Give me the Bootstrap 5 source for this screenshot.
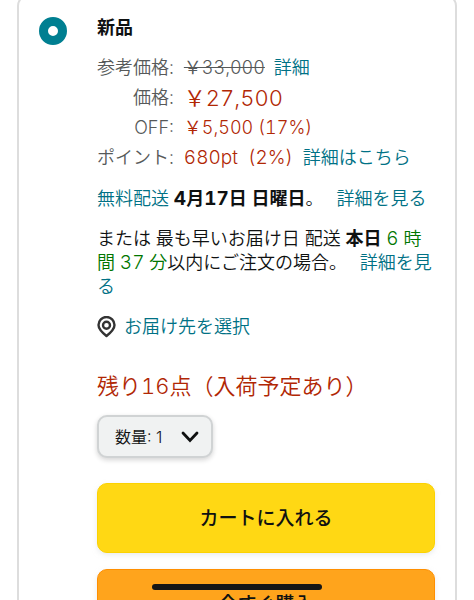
<!DOCTYPE html>
<html lang="ja">
<head>
<meta charset="utf-8">
<meta name="viewport" content="width=device-width, initial-scale=1">
<title>新品 - 購入オプション</title>
<link href="https://cdn.jsdelivr.net/npm/bootstrap@5.3.0/dist/css/bootstrap.min.css" rel="stylesheet">
<style>
  body { font-family: Inter, "Noto Sans CJK JP", sans-serif; font-size: 18px; line-height: 24px; font-weight: 350; font-variant-numeric: tabular-nums; color: #0f1111; background: #fff; }
  a { color: #007185; text-decoration: none; }
  b, .offer-title { font-weight: 700; }
  .screen { height: 100vh; }
  .offer { margin: -6px 17px 0; padding: 20px 20px 20px; border: 2px solid #ddd; border-radius: 12px; gap: 30px; }
  .offer-radio { appearance: none; flex: none; width: 28px; height: 28px; margin: 1px 0 0; border: 9px solid #007f91; border-radius: 50%; background: #fff; }
  .offer-title { font-size: 18px; line-height: 24px; margin: 0 0 13px; }
  .prices { margin-bottom: 14px; }
  .prices th, .prices td { height: 30px; padding: 0; line-height: 24px; vertical-align: middle; white-space: nowrap; }
  .prices th { font-weight: 350; color: #565959; text-align: right; padding-right: 10px; }
  .list-price { color: #565959; }
  .deal { color: #b12704; }
  .deal-lg { font-size: 22px; }
  .urgent { color: #007600; }
  .num { font-size: 19px; }
  .more { margin-left: 8px; }
  .place { margin-bottom: 32px; }
  .stock { font-size: 22px; line-height: 30px; margin-bottom: 14px; }
  .qty { appearance: none; width: 116px; height: 43px; padding: 0 12px 0 16px; font-size: 16px; font-weight: 350; color: #0f1111; border: 2px solid #d0d3d4; border-radius: 10px; box-shadow: 0 2px 5px rgba(15,17,17,.18); background: #f0f2f2 url("data:image/svg+xml,%3Csvg xmlns='http://www.w3.org/2000/svg' viewBox='0 0 18 12'%3E%3Cpath d='M2 2l7 7.500 7-7.500' fill='none' stroke='%230f1111' stroke-width='2.800' stroke-linecap='round'/%3E%3C/svg%3E") no-repeat right 12px center / 18px 12px; margin-bottom: 25px; }
  .buy { height: 70px; padding-top: 8px; border: 1px solid #fcd200; border-radius: 10px; background: #ffd814; color: #0f1111; font-size: 19px; font-weight: 500; box-shadow: 0 2px 5px rgba(213,217,217,.5); }
  .buy-now { background: #ffa41c; border-color: #ff8f00; }
  .home-bar { position: fixed; left: 50%; bottom: 10px; width: 170px; height: 6px; margin-left: -85px; border-radius: 3px; background: #161616; }
</style>
</head>
<body>
<main class="screen overflow-hidden">
  <section class="offer d-flex align-items-start">
    <input class="offer-radio" type="radio" id="new" name="condition" checked>
    <div class="flex-grow-1">
      <h1 class="offer-title"><label for="new">新品</label></h1>
      <table class="prices">
        <tbody>
          <tr><th scope="row">参考価格:</th><td><s class="list-price">￥33,000</s> <a class="ms-1" href="#">詳細</a></td></tr>
          <tr><th scope="row">価格:</th><td class="deal deal-lg">￥27,500</td></tr>
          <tr><th scope="row">OFF:</th><td class="deal">￥5,500 (17%)</td></tr>
          <tr><th scope="row">ポイント:</th><td><span class="deal num">680pt&nbsp; (2%)</span>&nbsp; <a href="#">詳細はこちら</a></td></tr>
        </tbody>
      </table>
      <p class="mb-3"><a href="#">無料配送</a> <b><span class="num">4</span>月<span class="num">17</span>日 日曜日</b>。 <a class="more" href="#">詳細を見る</a></p>
      <p class="mb-3">または 最も早いお届け日 配送 <b>本日</b> <span class="urgent"><span class="num">6</span> 時間 <span class="num">37</span> 分</span>以内にご注文の場合。 <a class="more" href="#">詳細を見る</a></p>
      <a class="place d-flex align-items-center gap-2" href="#">
        <svg width="19" height="22" viewBox="0 0 19 22" fill="none" stroke="#333" stroke-width="2.400" aria-hidden="true"><path d="M9.500 20C7 18 1.500 13.500 1.500 9a8 8 0 0 1 16 0c0 4.500-5.500 9-8 11z" stroke-linejoin="round"/><circle cx="9.500" cy="9.300" r="3.500"/></svg>
        お届け先を選択
      </a>
      <p class="stock deal">残り16点（入荷予定あり）</p>
      <select class="qty d-block" aria-label="数量"><option>数量: 1</option><option>数量: 2</option></select>
      <button type="button" class="btn buy w-100 d-block mb-3">カートに入れる</button>
      <button type="button" class="btn buy buy-now w-100 d-block">今すぐ購入</button>
    </div>
  </section>
</main>
<div class="home-bar"></div>
<script src="https://cdn.jsdelivr.net/npm/bootstrap@5.3.0/dist/js/bootstrap.bundle.min.js"></script>
</body>
</html>
